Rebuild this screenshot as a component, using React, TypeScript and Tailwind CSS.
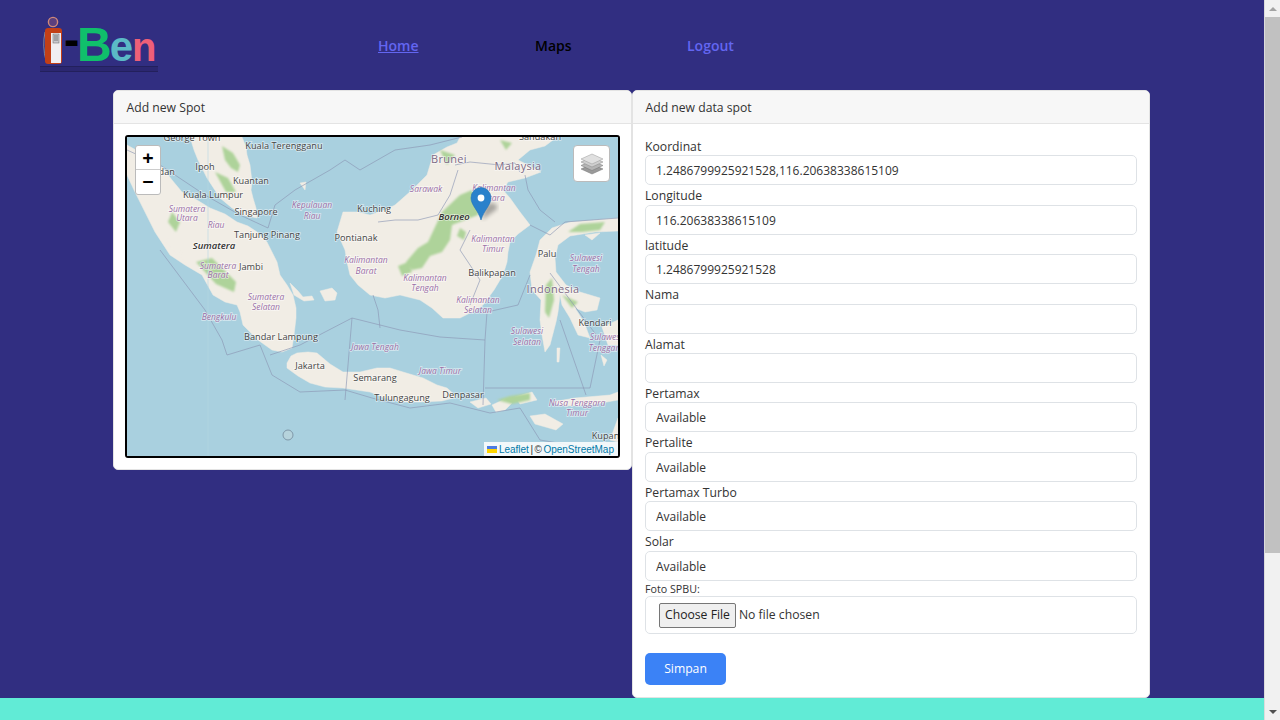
import React from "react";

const font = { fontFamily: '"Open Sans", "Noto Sans", sans-serif' };

const land = [
  // malay peninsula
  "M190,137 L194,150 L198,160 L207,178 L220,198 L232,208 L243,215 L257,218 L256,208 L253,198 L251,190 L252,182 L250,165 L247,155 L246,147 L242,137 Z",
  // sumatra
  "M127,145 L145,155 L163,168 L172,180 L182,192 L197,200 L210,208 L225,214 L237,222 L248,226 L257,232 L267,242 L272,252 L277,262 L280,275 L287,285 L293,295 L296,308 L296,318 L294,335 L292,348 L282,352 L272,350 L258,340 L243,325 L240,312 L237,305 L225,302 L213,295 L202,275 L185,265 L170,255 L155,232 L143,208 L134,190 L127,175 Z",
  // java
  "M287,363 L291,356 L297,353 L308,352 L317,353 L330,364 L343,372 L360,372 L377,368 L390,368 L403,372 L423,378 L437,385 L447,388 L457,397 L442,401 L420,402 L403,402 L385,398 L370,392 L343,388 L325,387 L310,383 L298,376 L287,368 Z",
  // borneo
  "M460,137 L557,137 L545,146 L530,150 L518,160 L530,166 L541,172 L525,178 L508,182 L503,190 L510,198 L520,212 L530,225 L518,234 L510,242 L508,252 L507,262 L503,275 L494,290 L483,305 L472,312 L460,318 L443,318 L432,308 L420,300 L400,295 L385,298 L370,295 L358,285 L350,275 L347,262 L345,250 L337,232 L340,222 L343,212 L358,212 L370,215 L385,210 L395,205 L412,190 L427,175 L430,165 L433,155 L447,147 L457,143 Z",
  // sulawesi
  "M540,240 L552,228 L570,222 L595,220 L618,218 L618,231 L595,232 L570,236 L558,245 L555,258 L556,272 L566,285 L580,292 L600,298 L597,310 L585,312 L575,308 L584,322 L590,338 L578,335 L570,318 L562,305 L560,295 L558,312 L556,322 L550,345 L545,352 L542,335 L540,320 L541,300 L532,290 L530,272 L536,255 Z",
  "M557,348 L560,348 L559,362 L557,362 Z M602,327 L618,320 L618,345 L608,345 Z M601,355 L607,360 L604,366 Z",
  // bangka etc
  "M320,291 L332,288 L337,293 L335,300 L325,301 Z M290,283 L298,291 L303,297 L312,296 L314,300 L304,301 L294,295 Z",
  // sunda islands
  "M470,402 L486,398 L491,404 L478,408 Z M492,405 L505,399 L512,403 L505,410 L496,412 Z M515,397 L532,392 L537,400 L520,404 Z M552,402 L575,398 L610,395 L618,392 L618,400 L590,405 L565,406 Z M530,416 L545,414 L563,424 L556,430 L535,424 Z M618,418 L610,440 L618,442 Z",
  // small bits
  "M168,238 L180,250 L178,254 L166,243 Z M182,252 L192,262 L188,266 L180,256 Z M351,230 L345,238 L349,240 Z M300,183 L306,182 L305,190 Z M585,235 L600,233 L592,240 Z",
];

const green = [
  "M222,146 L233,153 L240,165 L238,172 L231,168 L225,160 Z",
  "M215,172 L228,178 L236,192 L226,192 Z",
  "M196,262 L212,258 L222,268 L236,282 L234,292 L216,284 Z",
  "M172,212 L180,222 L176,232 L168,222 Z",
  "M442,212 L460,195 L472,190 L480,200 L478,215 L465,220 L452,225 L450,240 L442,252 L430,256 L422,268 L412,270 L406,262 L418,248 L428,242 Z",
  "M398,266 L408,262 L412,272 L402,276 Z",
  "M460,228 L466,232 L464,240 L457,236 Z",
  "M568,232 L580,224 L605,222 L600,230 L582,232 Z",
  "M546,285 L552,278 L554,300 L549,318 L545,312 Z",
  "M562,295 L578,302 L572,308 Z",
  "M440,150 L455,155 L447,165 Z",
  "M497,400 L510,396 L530,393 L530,400 L512,404 Z",
  "M500,140 L512,143 L506,150 Z",
];

const borders = [
  "M127,150 L160,165 L205,195 L240,215 L268,228 L275,205 L295,190 L330,170 L345,160 L360,170 L395,150 L430,145 L462,137",
  "M160,250 L205,310 L222,340 L227,355 L260,345 L272,375 L300,392 L345,390 L372,398 L410,408 L450,403 L490,413 L520,408 L540,440 L600,450",
  "M270,355 L300,345 L352,318 L345,400",
  "M352,318 L400,330 L440,337 L485,340 L483,405",
  "M485,340 L487,312 L518,305 L530,275",
  "M550,273 L600,340 L590,388 L485,388",
  "M530,225 L550,235 L565,222 L618,218",
  "M525,175 L528,190 L540,210 L555,222",
  "M455,165 L470,162 L500,165 L515,163 L520,172",
  "M458,170 L450,195 L438,215 L418,220 L395,220 L378,222",
  "M470,230 L460,250 L480,280 L470,305",
  "M373,295 L378,310 L380,328",
  "M560,320 L586,395",
];

// [text, x, baseline, kind]
const labels: [string, number, number, string][] = [
  ["George Town", 192, 141, "city"],
  ["Kuala Terengganu", 284, 149, "city"],
  ["Ipoh", 205, 170, "city"],
  ["Medan", 160, 175, "city"],
  ["Kuantan", 251, 184, "city"],
  ["Kuala Lumpur", 213, 198, "city"],
  ["Singapore", 256, 215, "city"],
  ["Tanjung Pinang", 267, 238, "city"],
  ["Pontianak", 356, 241, "city"],
  ["Kuching", 374, 212, "city"],
  ["Jambi", 251, 270, "city"],
  ["Sandakan", 540, 140, "city"],
  ["Balikpapan", 492, 276, "city"],
  ["Palu", 547, 257, "city"],
  ["Kendari", 595, 326, "city"],
  ["Bandar Lampung", 281, 340, "city"],
  ["Jakarta", 310, 369, "city"],
  ["Semarang", 375, 381, "city"],
  ["Tulungagung", 402, 401, "city"],
  ["Denpasar", 463, 398, "city"],
  ["Kupang", 608, 439, "city"],
  ["Brunei", 449, 163, "country"],
  ["Malaysia", 518, 170, "country"],
  ["Indonesia", 553, 293, "country"],
  ["Sumatera", 214, 249, "island"],
  ["Borneo", 454, 220, "island"],
  ["Sumatera", 187, 212, "region"],
  ["Utara", 187, 221, "region"],
  ["Riau", 216, 228, "region"],
  ["Kepulauan", 312, 208, "region"],
  ["Riau", 312, 219, "region"],
  ["Sumatera", 218, 269, "region"],
  ["Barat", 218, 278, "region"],
  ["Sumatera", 266, 300, "region"],
  ["Selatan", 266, 310, "region"],
  ["Bengkulu", 219, 320, "region"],
  ["Sarawak", 426, 192, "region"],
  ["Kalimantan", 494, 191, "region"],
  ["Utara", 494, 201, "region"],
  ["Kalimantan", 493, 242, "region"],
  ["Timur", 493, 252, "region"],
  ["Kalimantan", 366, 263, "region"],
  ["Barat", 366, 274, "region"],
  ["Kalimantan", 425, 281, "region"],
  ["Tengah", 425, 291, "region"],
  ["Kalimantan", 478, 303, "region"],
  ["Selatan", 478, 313, "region"],
  ["Sulawesi", 586, 261, "region"],
  ["Tengah", 586, 272, "region"],
  ["Sulawesi", 527, 334, "region"],
  ["Selatan", 527, 345, "region"],
  ["Sulawesi", 606, 340, "region"],
  ["Tenggara", 606, 351, "region"],
  ["Jawa Tengah", 375, 350, "region"],
  ["Jawa Timur", 440, 374, "region"],
  ["Nusa Tenggara", 577, 406, "region"],
  ["Timur", 577, 416, "region"],
];

const labelProps = (kind: string) => {
  if (kind === "region") return { fill: "#9a6fa6", fontSize: 8.5, fontStyle: "italic" };
  if (kind === "island") return { fill: "#333", fontSize: 9.5, fontStyle: "italic", fontWeight: 600 };
  if (kind === "country") return { fill: "#7d6a85", fontSize: 11, letterSpacing: 0.3 };
  return { fill: "#444", fontSize: 9.2 };
};

function MapArt() {
  return (
    <svg viewBox="127 137 491 319" className="block w-full h-full" style={font}>
      <defs>
        <filter id="soft">
          <feGaussianBlur stdDeviation="1" />
        </filter>
        <filter id="softer">
          <feGaussianBlur stdDeviation="2" />
        </filter>
      </defs>
      <rect x="127" y="137" width="491" height="319" fill="#a9d0df" />
      {land.map((d, i) => (
        <path key={i} d={d} fill="#f1ede5" stroke="#f1ede5" strokeWidth="0.5" strokeLinejoin="round" />
      ))}
      <g filter="url(#soft)">
        {green.map((d, i) => (
          <path key={i} d={d} fill="#aed39a" />
        ))}
      </g>
      <path d="M208,137 V456" stroke="#b5d6e2" strokeWidth="0.6" fill="none" />
      {borders.map((d, i) => (
        <path key={i} d={d} stroke="#8a96b4" strokeOpacity="0.8" strokeWidth="0.8" fill="none" />
      ))}
      <circle cx="288" cy="435" r="5" fill="#b6d3dc" stroke="#7f97a8" strokeWidth="1" />
      {labels.map(([t, x, y, kind], i) => (
        <text
          key={i}
          x={x}
          y={y}
          textAnchor="middle"
          stroke="#ffffff"
          strokeOpacity="0.55"
          strokeWidth="1.6"
          paintOrder="stroke"
          {...labelProps(kind)}
        >
          {t}
        </text>
      ))}
      {/* marker */}
      <path d="M482,220 L497,209 Q498,202 490,203 L485,206 Z" fill="#000" opacity="0.3" filter="url(#softer)" />
      <path
        d="M481,220 C478,210 471,205 471,198 A10,10.5 0 0 1 491,198 C491,205 484,210 481,220 Z"
        fill="#2a81cb"
        stroke="#2573b5"
        strokeWidth="0.6"
      />
      <circle cx="481" cy="198" r="3.4" fill="#fff" />
    </svg>
  );
}

function Logo() {
  return (
    <div className="relative h-[58px] w-[120px]">
      <svg width="24" height="50" viewBox="0 0 24 50" className="absolute left-[2px] top-0">
        <circle cx="11" cy="6" r="4.6" fill="#5b3f7d" stroke="#d0897a" strokeWidth="1.4" />
        <path d="M3,16 Q0,30 4,45" stroke="#9a9aa0" strokeWidth="0.8" fill="none" />
        <rect x="3" y="12" width="17" height="36" rx="3" fill="#c23f17" />
        <rect x="9" y="17" width="10" height="30" fill="#f0eef2" />
        <rect x="11" y="18" width="6" height="9" fill="#c9c9cf" stroke="#666" strokeWidth="0.5" />
        <path d="M12,20 H16 M12,22 H16 M12,24 H16" stroke="#555" strokeWidth="0.7" />
      </svg>
      <div
        className="absolute left-[24px] top-0 h-[58px] flex items-baseline font-bold leading-[58px] whitespace-nowrap"
        style={{ fontFamily: '"Liberation Sans", Arial, sans-serif' }}
      >
        <span className="relative -top-[6px] w-[13px] text-[46px] text-black">-</span>
        <span className="text-[48px] tracking-[-2px] text-[#10bf6b]">B</span>
        <span className="text-[42px] tracking-[-1px] text-[#5bbac6]">e</span>
        <span className="text-[40px] text-[#ee5f78]">n</span>
      </div>
      <div className="absolute left-0 top-[50px] w-[118px] h-[6px] border-y border-[#23205c] bg-[#2b2770]" />
    </div>
  );
}

const Field = ({ label, value = "" }: { label: string; value?: string }) => (
  <div>
    <label className="block h-[19.4px] text-[12.2px] leading-[21px] text-[#333]">{label}</label>
    <input
      readOnly
      value={value}
      className="block w-full h-[30px] rounded-[5px] border border-[#dee2e6] bg-white pt-[1px] px-[10px] text-[12px] text-[#333] outline-none"
      style={font}
    />
  </div>
);

const Card = ({ title, className, children }: { title: string; className: string; children: React.ReactNode }) => (
  <div className={"bg-white rounded-[5px] overflow-hidden border border-[#e3e3e3] " + className}>
    <div className="h-[33px] bg-[#f7f7f7] border-b border-[#e4e4e4] px-[12.5px] pt-[2px] flex items-center text-[12.2px] text-[#333]">
      {title}
    </div>
    {children}
  </div>
);

export default function App() {
  return (
    <div className="h-screen w-full flex overflow-hidden" style={font}>
      <div className="flex-1 min-w-0 flex flex-col bg-[#312e81]">
        <nav className="h-[90px] shrink-0 flex items-start pl-[40px] pt-[16px]">
          <div className="w-[338px]">
            <Logo />
          </div>
          <div className="flex items-center h-[58px] text-[14px] font-semibold">
            <a href="#" className="w-[157px] text-[#6366f1] underline">
              Home
            </a>
            <a href="#" className="w-[152px] text-black">
              Maps
            </a>
            <a href="#" className="text-[#6366f1]">
              Logout
            </a>
          </div>
        </nav>

        <main className="flex-1 flex items-start pl-[113px]">
          <Card title="Add new Spot" className="w-[519px] h-[380px]">
            <div className="pt-[11px] pl-[11px] pr-[11px]">
              <div className="relative h-[323px] w-[495px] border-2 border-black rounded-[3px] overflow-hidden">
                <MapArt />
                <div className="absolute left-[8px] top-[8px] w-[26px] rounded-[3px] bg-white border border-[#bbb] text-black">
                  <div className="h-[24px] flex items-center justify-center text-[20px] font-bold border-b border-[#ccc]">
                    +
                  </div>
                  <div className="h-[24px] flex items-center justify-center text-[20px] font-bold">−</div>
                </div>
                <div className="absolute right-[8px] top-[8px] w-[37px] h-[37px] rounded-[4px] bg-white border border-[#bbb] flex items-center justify-center">
                  <svg width="24" height="24" viewBox="0 0 24 24">
                    <path d="M12,12 L23,17 L12,22 L1,17 Z" fill="#9a9a9a" stroke="#777" strokeWidth="0.5" />
                    <path d="M12,8.5 L23,13.5 L12,18.5 L1,13.5 Z" fill="#b5b5b5" stroke="#777" strokeWidth="0.5" />
                    <path d="M12,5 L23,10 L12,15 L1,10 Z" fill="#cfcfcf" stroke="#888" strokeWidth="0.5" />
                    <path d="M12,2 L23,7 L12,12 L1,7 Z" fill="#e0e0e0" stroke="#999" strokeWidth="0.5" />
                  </svg>
                </div>
                <div
                  className="absolute right-0 bottom-0 h-[14px] pl-[3px] pr-[4px] bg-white/85 flex items-center gap-[1.5px] text-[10px] text-[#333]"
                  style={{ fontFamily: '"Liberation Sans", Arial, sans-serif' }}
                >
                  <span className="inline-flex flex-col w-[10px] h-[7px]">
                    <span className="h-[3.5px] bg-[#4c7be1]" />
                    <span className="h-[3.5px] bg-[#ffd500]" />
                  </span>
                  <span className="text-[#0078a8]">Leaflet</span>
                  <span>|</span>
                  <span>©</span>
                  <span className="text-[#0078a8]">OpenStreetMap</span>
                </div>
              </div>
            </div>
          </Card>

          <Card title="Add new data spot" className="w-[518px] h-[608px]">
            <div className="pt-[12px] px-[12px]">
              <Field label="Koordinat" value="1.2486799925921528,116.20638338615109" />
              <Field label="Longitude" value="116.20638338615109" />
              <Field label="latitude" value="1.2486799925921528" />
              <Field label="Nama" />
              <Field label="Alamat" />
              <Field label="Pertamax" value="Available" />
              <Field label="Pertalite" value="Available" />
              <Field label="Pertamax Turbo" value="Available" />
              <Field label="Solar" value="Available" />
              <label className="block h-[15px] text-[10.7px] leading-[17px] text-[#333]">Foto SPBU:</label>
              <div className="h-[38px] rounded-[5px] border border-[#dee2e6] flex items-center pl-[13px] pt-[1px]">
                <input
                  type="file"
                  className="text-[12.2px] text-[#333] file:h-[25px] file:px-[5px] file:mr-[3px] file:bg-[#efefef] file:border file:border-[#767676] file:rounded-[2px] file:text-[12.2px] file:text-[#222]"
                  style={font}
                />
              </div>
              <button className="mt-[19px] block w-[81px] h-[32px] pt-[2px] rounded-[5px] bg-[#3b82f6] text-white text-[12.2px]">
                Simpan
              </button>
            </div>
          </Card>
        </main>

        <div className="h-[22px] shrink-0 bg-[#61ebd6]" />
      </div>

      <div className="w-[16px] shrink-0 flex flex-col bg-[#f1f1f1] border-l border-[#dcdcdc]">
        <div className="h-[17px] flex items-center justify-center">
          <div className="w-0 h-0 border-x-[4px] border-x-transparent border-b-[4px] border-b-[#a3a3a3]" />
        </div>
        <div className="h-[536px] bg-[#c1c1c1]" />
        <div className="flex-1" />
        <div className="h-[17px] flex items-center justify-center">
          <div className="w-0 h-0 border-x-[4px] border-x-transparent border-t-[4px] border-t-[#505050]" />
        </div>
      </div>
    </div>
  );
}
